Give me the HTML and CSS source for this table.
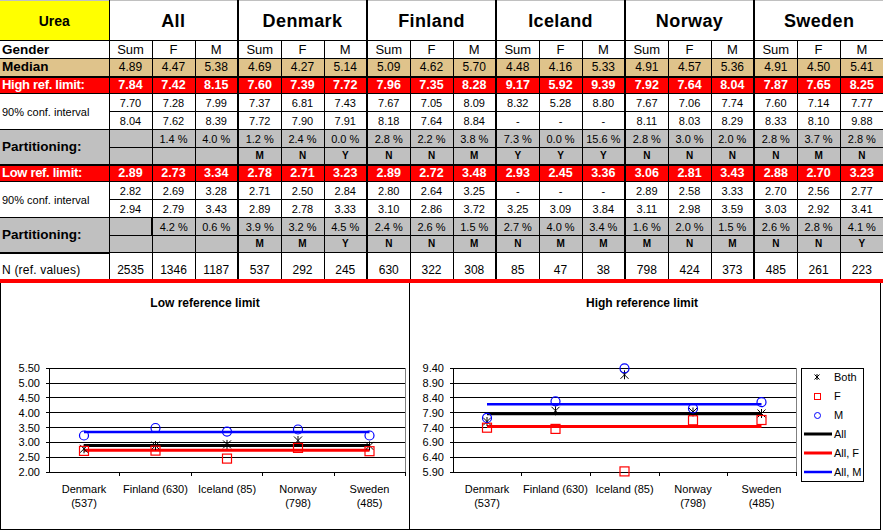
FILE: index.html
```html
<!DOCTYPE html>
<html>
<head>
<meta charset="utf-8">
<title>Urea reference limits</title>
<link rel="stylesheet" href="styles.css">
</head>
<body>
<table class="ref">
<colgroup><col class="c-label"><col span="18" class="c-val"></colgroup>
<tr class="r-head">
<th class="urea">Urea</th>
<th colspan="3" class="grp">All</th>
<th colspan="3" class="grp g">Denmark</th>
<th colspan="3" class="grp g">Finland</th>
<th colspan="3" class="grp g">Iceland</th>
<th colspan="3" class="grp g">Norway</th>
<th colspan="3" class="grp g">Sweden</th>
</tr>
<tr class="r-gender">
<td class="lbl">Gender</td>
<td>Sum</td><td>F</td><td>M</td>
<td class="g">Sum</td><td>F</td><td>M</td>
<td class="g">Sum</td><td>F</td><td>M</td>
<td class="g">Sum</td><td>F</td><td>M</td>
<td class="g">Sum</td><td>F</td><td>M</td>
<td class="g">Sum</td><td>F</td><td>M</td>
</tr>
<tr class="r-median">
<td class="lbl">Median</td>
<td>4.89</td><td>4.47</td><td>5.38</td>
<td class="g">4.69</td><td>4.27</td><td>5.14</td>
<td class="g">5.09</td><td>4.62</td><td>5.70</td>
<td class="g">4.48</td><td>4.16</td><td>5.33</td>
<td class="g">4.91</td><td>4.57</td><td>5.36</td>
<td class="g">4.91</td><td>4.50</td><td>5.41</td>
</tr>
<tr class="r-red">
<td class="lbl">High ref. limit:</td>
<td>7.84</td><td>7.42</td><td>8.15</td>
<td class="g">7.60</td><td>7.39</td><td>7.72</td>
<td class="g">7.96</td><td>7.35</td><td>8.28</td>
<td class="g">9.17</td><td>5.92</td><td>9.39</td>
<td class="g">7.92</td><td>7.64</td><td>8.04</td>
<td class="g">7.87</td><td>7.65</td><td>8.25</td>
</tr>
<tr class="r-ci">
<td class="lbl ci-lbl" rowspan="2">90% conf. interval</td>
<td>7.70</td><td>7.28</td><td>7.99</td>
<td class="g">7.37</td><td>6.81</td><td>7.43</td>
<td class="g">7.67</td><td>7.05</td><td>8.09</td>
<td class="g">8.32</td><td>5.28</td><td>8.80</td>
<td class="g">7.67</td><td>7.06</td><td>7.74</td>
<td class="g">7.60</td><td>7.14</td><td>7.77</td>
</tr>
<tr class="r-ci">
<td>8.04</td><td>7.62</td><td>8.39</td>
<td class="g">7.72</td><td>7.90</td><td>7.91</td>
<td class="g">8.18</td><td>7.64</td><td>8.84</td>
<td class="g">-</td><td>-</td><td>-</td>
<td class="g">8.11</td><td>8.03</td><td>8.29</td>
<td class="g">8.33</td><td>8.10</td><td>9.88</td>
</tr>
<tr class="r-part">
<td class="lbl" rowspan="2">Partitioning:</td>
<td></td><td>1.4 %</td><td>4.0 %</td>
<td class="g">1.2 %</td><td>2.4 %</td><td>0.0 %</td>
<td class="g">2.8 %</td><td>2.2 %</td><td>3.8 %</td>
<td class="g">7.3 %</td><td>0.0 %</td><td>15.6 %</td>
<td class="g">2.8 %</td><td>3.0 %</td><td>2.0 %</td>
<td class="g">2.8 %</td><td>3.7 %</td><td>2.8 %</td>
</tr>
<tr class="r-part r-code">
<td></td><td></td><td></td>
<td class="g">M</td><td>N</td><td>Y</td>
<td class="g">N</td><td>N</td><td>M</td>
<td class="g">Y</td><td>Y</td><td>Y</td>
<td class="g">N</td><td>N</td><td>N</td>
<td class="g">N</td><td>M</td><td>N</td>
</tr>
<tr class="r-red">
<td class="lbl">Low ref. limit:</td>
<td>2.89</td><td>2.73</td><td>3.34</td>
<td class="g">2.78</td><td>2.71</td><td>3.23</td>
<td class="g">2.89</td><td>2.72</td><td>3.48</td>
<td class="g">2.93</td><td>2.45</td><td>3.36</td>
<td class="g">3.06</td><td>2.81</td><td>3.43</td>
<td class="g">2.88</td><td>2.70</td><td>3.23</td>
</tr>
<tr class="r-ci">
<td class="lbl ci-lbl" rowspan="2">90% conf. interval</td>
<td>2.82</td><td>2.69</td><td>3.28</td>
<td class="g">2.71</td><td>2.50</td><td>2.84</td>
<td class="g">2.80</td><td>2.64</td><td>3.25</td>
<td class="g">-</td><td>-</td><td>-</td>
<td class="g">2.89</td><td>2.58</td><td>3.33</td>
<td class="g">2.70</td><td>2.56</td><td>2.77</td>
</tr>
<tr class="r-ci">
<td>2.94</td><td>2.79</td><td>3.43</td>
<td class="g">2.89</td><td>2.78</td><td>3.33</td>
<td class="g">3.10</td><td>2.86</td><td>3.72</td>
<td class="g">3.25</td><td>3.09</td><td>3.84</td>
<td class="g">3.11</td><td>2.98</td><td>3.59</td>
<td class="g">3.03</td><td>2.92</td><td>3.41</td>
</tr>
<tr class="r-part">
<td class="lbl lbl-last" rowspan="2">Partitioning:</td>
<td></td><td class="g">4.2 %</td><td>0.6 %</td>
<td class="g">3.9 %</td><td>3.2 %</td><td>4.5 %</td>
<td class="g">2.4 %</td><td>2.6 %</td><td>1.5 %</td>
<td class="g">2.7 %</td><td>4.0 %</td><td>3.4 %</td>
<td class="g">1.6 %</td><td>2.0 %</td><td>1.5 %</td>
<td class="g">2.6 %</td><td>2.8 %</td><td>4.1 %</td>
</tr>
<tr class="r-part r-code">
<td></td><td></td><td></td>
<td class="g">M</td><td>M</td><td>Y</td>
<td class="g">N</td><td>N</td><td>M</td>
<td class="g">N</td><td>M</td><td>M</td>
<td class="g">M</td><td>N</td><td>M</td>
<td class="g">N</td><td>N</td><td>Y</td>
</tr>
<tr class="r-n">
<td class="lbl">N (ref. values)</td>
<td>2535</td><td>1346</td><td>1187</td>
<td class="g">537</td><td>292</td><td>245</td>
<td class="g">630</td><td>322</td><td>308</td>
<td class="g">85</td><td>47</td><td>38</td>
<td class="g">798</td><td>424</td><td>373</td>
<td class="g">485</td><td>261</td><td>223</td>
</tr>
</table>

<div class="charts">
<div class="panel panel-left">
<svg class="chart" width="408" height="244" viewBox="0 0 408 244">
<text x="204" y="21.5" class="ttl" text-anchor="middle">Low reference limit</text>
<g class="grid">
<line x1="48" y1="83.5" x2="404" y2="83.5"/>
<line x1="48" y1="98.5" x2="404" y2="98.5"/>
<line x1="48" y1="112.5" x2="404" y2="112.5"/>
<line x1="48" y1="127.5" x2="404" y2="127.5"/>
<line x1="48" y1="142.5" x2="404" y2="142.5"/>
<line x1="48" y1="157.5" x2="404" y2="157.5"/>
<line x1="48" y1="172.5" x2="404" y2="172.5"/>
<line x1="48" y1="187.5" x2="404" y2="187.5"/>
<line x1="48.5" y1="83" x2="48.5" y2="188"/>
<line x1="45" y1="83.5" x2="48" y2="83.5"/>
<line x1="45" y1="98.5" x2="48" y2="98.5"/>
<line x1="45" y1="112.5" x2="48" y2="112.5"/>
<line x1="45" y1="127.5" x2="48" y2="127.5"/>
<line x1="45" y1="142.5" x2="48" y2="142.5"/>
<line x1="45" y1="157.5" x2="48" y2="157.5"/>
<line x1="45" y1="172.5" x2="48" y2="172.5"/>
<line x1="45" y1="187.5" x2="48" y2="187.5"/>
<line x1="118.5" y1="187" x2="118.5" y2="191"/>
<line x1="190.5" y1="187" x2="190.5" y2="191"/>
<line x1="261.5" y1="187" x2="261.5" y2="191"/>
<line x1="333.5" y1="187" x2="333.5" y2="191"/>
<line x1="404.5" y1="187" x2="404.5" y2="191"/>
</g>
<line class="frame" x1="404.5" y1="83" x2="404.5" y2="187"/>
<g class="ylab" text-anchor="end">
<text x="39" y="87">5.50</text>
<text x="39" y="102">5.00</text>
<text x="39" y="116.5">4.50</text>
<text x="39" y="131.5">4.00</text>
<text x="39" y="146.5">3.50</text>
<text x="39" y="161">3.00</text>
<text x="39" y="176">2.50</text>
<text x="39" y="191">2.00</text>
</g>
<g class="xlab" text-anchor="middle">
<text x="83" y="207.5">Denmark</text><text x="83" y="221.5">(537)</text>
<text x="154.5" y="207.5">Finland (630)</text>
<text x="226" y="207.5">Iceland (85)</text>
<text x="297" y="207.5">Norway</text><text x="297" y="221.5">(798)</text>
<text x="368.5" y="207.5">Sweden</text><text x="368.5" y="221.5">(485)</text>
</g>
<line class="l-m" x1="83" y1="147" x2="368.5" y2="147"/>
<line class="l-all" x1="83" y1="160.5" x2="368.5" y2="160.5"/>
<line class="l-f" x1="83" y1="165.3" x2="368.5" y2="165.3"/>
<g class="mk-both">
<path d="M79 159.8l8 8M87 159.8l-8 8M83 159.3v9"/>
<path d="M150.5 156.6l8 8M158.5 156.6l-8 8M154.5 156.1v9"/>
<path d="M222 155.4l8 8M230 155.4l-8 8M226 154.9v9"/>
<path d="M293 151.5l8 8M301 151.5l-8 8M297 151v9"/>
<path d="M364.5 156.9l8 8M372.5 156.9l-8 8M368.5 156.4v9"/>
</g>
<g class="mk-f">
<rect x="78.5" y="161.4" width="9" height="9"/>
<rect x="150" y="161.1" width="9" height="9"/>
<rect x="221.5" y="169.1" width="9" height="9"/>
<rect x="292.5" y="158.4" width="9" height="9"/>
<rect x="364" y="161.7" width="9" height="9"/>
</g>
<g class="mk-m">
<circle cx="83" cy="150.5" r="4.5"/>
<circle cx="154.5" cy="143" r="4.5"/>
<circle cx="226" cy="146.6" r="4.5"/>
<circle cx="297" cy="144.5" r="4.5"/>
<circle cx="368.5" cy="150.5" r="4.5"/>
</g>
</svg>
</div>
<div class="panel panel-right">
<svg class="chart" width="470" height="244" viewBox="0 0 470 244">
<text x="232" y="21.5" class="ttl" text-anchor="middle">High reference limit</text>
<g class="grid">
<line x1="43" y1="83.5" x2="386" y2="83.5"/>
<line x1="43" y1="98.5" x2="386" y2="98.5"/>
<line x1="43" y1="112.5" x2="386" y2="112.5"/>
<line x1="43" y1="127.5" x2="386" y2="127.5"/>
<line x1="43" y1="142.5" x2="386" y2="142.5"/>
<line x1="43" y1="157.5" x2="386" y2="157.5"/>
<line x1="43" y1="172.5" x2="386" y2="172.5"/>
<line x1="43" y1="187.5" x2="386" y2="187.5"/>
<line x1="43.5" y1="83" x2="43.5" y2="188"/>
<line x1="40" y1="83.5" x2="43" y2="83.5"/>
<line x1="40" y1="98.5" x2="43" y2="98.5"/>
<line x1="40" y1="112.5" x2="43" y2="112.5"/>
<line x1="40" y1="127.5" x2="43" y2="127.5"/>
<line x1="40" y1="142.5" x2="43" y2="142.5"/>
<line x1="40" y1="157.5" x2="43" y2="157.5"/>
<line x1="40" y1="172.5" x2="43" y2="172.5"/>
<line x1="40" y1="187.5" x2="43" y2="187.5"/>
<line x1="111.5" y1="187" x2="111.5" y2="191"/>
<line x1="180.5" y1="187" x2="180.5" y2="191"/>
<line x1="249.5" y1="187" x2="249.5" y2="191"/>
<line x1="317.5" y1="187" x2="317.5" y2="191"/>
<line x1="386.5" y1="187" x2="386.5" y2="191"/>
</g>
<line class="frame" x1="386.5" y1="83" x2="386.5" y2="187"/>
<g class="ylab" text-anchor="end">
<text x="34" y="87">9.40</text>
<text x="34" y="102">8.90</text>
<text x="34" y="116.5">8.40</text>
<text x="34" y="131.5">7.90</text>
<text x="34" y="146.5">7.40</text>
<text x="34" y="161">6.90</text>
<text x="34" y="176">6.40</text>
<text x="34" y="191">5.90</text>
</g>
<g class="xlab" text-anchor="middle">
<text x="77" y="207.5">Denmark</text><text x="77" y="221.5">(537)</text>
<text x="145.5" y="207.5">Finland (630)</text>
<text x="214.5" y="207.5">Iceland (85)</text>
<text x="283" y="207.5">Norway</text><text x="283" y="221.5">(798)</text>
<text x="351.5" y="207.5">Sweden</text><text x="351.5" y="221.5">(485)</text>
</g>
<line class="l-m" x1="77" y1="119.3" x2="351.5" y2="119.3"/>
<line class="l-all" x1="77" y1="128.8" x2="351.5" y2="128.8"/>
<line class="l-f" x1="77" y1="141.5" x2="351.5" y2="141.5"/>
<g class="mk-both">
<path d="M73 132.5l8 8M81 132.5l-8 8M77 132v9"/>
<path d="M141.5 121.8l8 8M149.5 121.8l-8 8M145.5 121.3v9"/>
<path d="M210.5 85.8l8 8M218.5 85.8l-8 8M214.5 85.3v9"/>
<path d="M279 123l8 8M287 123l-8 8M283 122.5v9"/>
<path d="M347.5 124.5l8 8M355.5 124.5l-8 8M351.5 124v9"/>
</g>
<g class="mk-f">
<rect x="72.5" y="138.2" width="9" height="9"/>
<rect x="141" y="139.4" width="9" height="9"/>
<rect x="210" y="181.9" width="9" height="9"/>
<rect x="278.5" y="130.8" width="9" height="9"/>
<rect x="347" y="130.5" width="9" height="9"/>
</g>
<g class="mk-m">
<circle cx="77" cy="132.9" r="4.5"/>
<circle cx="145.5" cy="116.3" r="4.5"/>
<circle cx="214.5" cy="83.3" r="4.5"/>
<circle cx="283" cy="123.4" r="4.5"/>
<circle cx="351.5" cy="117.2" r="4.5"/>
</g>
<g class="legend">
<rect class="lg-box" x="391.5" y="83.5" width="62" height="113"/>
<path class="lg-both" d="M404.5 89.5l5 5M409.5 89.5l-5 5M407 89v6"/>
<rect class="lg-f" x="404.5" y="108.5" width="6" height="6"/>
<circle class="lg-m" cx="407.5" cy="130.5" r="3"/>
<line class="l-all" x1="394" y1="149" x2="422" y2="149"/>
<line class="l-f" x1="394" y1="168" x2="422" y2="168"/>
<line class="l-m" x1="394" y1="187" x2="422" y2="187"/>
<text x="424" y="96">Both</text>
<text x="424" y="115">F</text>
<text x="424" y="134">M</text>
<text x="424" y="153">All</text>
<text x="424" y="172">All, F</text>
<text x="424" y="191">All, M</text>
</g>
</svg>
</div>
</div>
</body>
</html>
```

FILE: styles.css
```css
* { box-sizing: border-box; }
html, body { margin: 0; padding: 0; background: #fff; }
body {
  width: 883px;
  height: 530px;
  overflow: hidden;
  font-family: "Liberation Sans", Arial, Helvetica, sans-serif;
  color: #000;
}

/* ---------- table ---------- */
.ref {
  border-collapse: collapse;
  table-layout: fixed;
  width: 883px;
  border-left: hidden;
  border-right: hidden;
}
.c-label { width: 109px; }
.c-val { width: 43px; }

.ref th, .ref td {
  border: 1px solid #000;
  padding: 0;
  text-align: center;
  vertical-align: middle;
  white-space: nowrap;
  overflow: hidden;
  font-size: 11px;
  line-height: 12px;
  font-weight: normal;
}
.ref .g { border-left: 2px solid #000; }

.r-head { height: 40px; }
.r-head th { border-top: 1px solid #c0c0c0; background: #fff; }
.r-head .urea { background: #ffff00; font-weight: bold; font-size: 14px; }
.r-head .grp { font-weight: bold; font-size: 18px; letter-spacing: 0.4px; }

.ref .lbl {
  text-align: left;
  padding-left: 2px;
  font-weight: bold;
  font-size: 13.5px;
}
.ref .ci-lbl { font-weight: normal; font-size: 11px; }

.r-gender { height: 18px; }
.r-gender td { font-size: 13px; }

.r-median { height: 18px; }
.r-median td { background: #dfc38b; font-size: 12px; }
.r-median td { border-bottom: 2px solid #000; }

.r-red { height: 17px; }
.r-red td {
  background: #ff0000;
  color: #fff;
  font-weight: bold;
  font-size: 12.5px;
}
.r-red .lbl { font-size: 13px; letter-spacing: -0.3px; }

.r-ci { height: 18px; }

.r-part { height: 18px; }
.r-part.r-code { height: 17px; }
.r-part td { background: #c0c0c0; }
.r-code td { font-weight: bold; font-size: 10px; }
.r-code + .r-red td { border-top: 2px solid #000; }
.ref .lbl-last { border-bottom: 2px solid #000; }

.r-n { height: 28px; }
.r-n td {
  font-size: 12px;
  vertical-align: bottom;
  padding-bottom: 3px;
  border-bottom: 4px solid #ff0000;
}
.r-n .lbl { font-weight: normal; font-size: 12px; letter-spacing: 0.2px; }

/* ---------- charts ---------- */
.charts {
  display: flex;
  height: 247px;
}
.panel {
  border-right: 1px solid #000;
  border-bottom: 1px solid #000;
  padding-top: 2px;
  background: #fff;
}
.panel-left { width: 410px; border-left: 1px solid #000; }
.panel-right { width: 471px; }
.chart { display: block; }

.chart text { font-family: "Liberation Sans", Arial, sans-serif; font-size: 11px; fill: #000; }
.chart .ttl { font-weight: bold; font-size: 12px; }
.grid line { stroke: #000; stroke-width: 1; }
.frame { stroke: #808080; stroke-width: 1; }

.l-all { stroke: #000; stroke-width: 3; }
.l-f { stroke: #ff0000; stroke-width: 3; }
.l-m { stroke: #0000ff; stroke-width: 2.5; }

.mk-both path { stroke: #000; stroke-width: 1; fill: none; }
.mk-f rect { stroke: #ff0000; stroke-width: 1.2; fill: none; }
.mk-m circle { stroke: #0000ff; stroke-width: 1.2; fill: none; }

.lg-box { fill: #fff; stroke: #000; stroke-width: 1; }
.lg-both { stroke: #000; stroke-width: 1; fill: none; }
.lg-f { stroke: #ff0000; stroke-width: 1; fill: none; }
.lg-m { stroke: #0000ff; stroke-width: 1; fill: none; }
```
